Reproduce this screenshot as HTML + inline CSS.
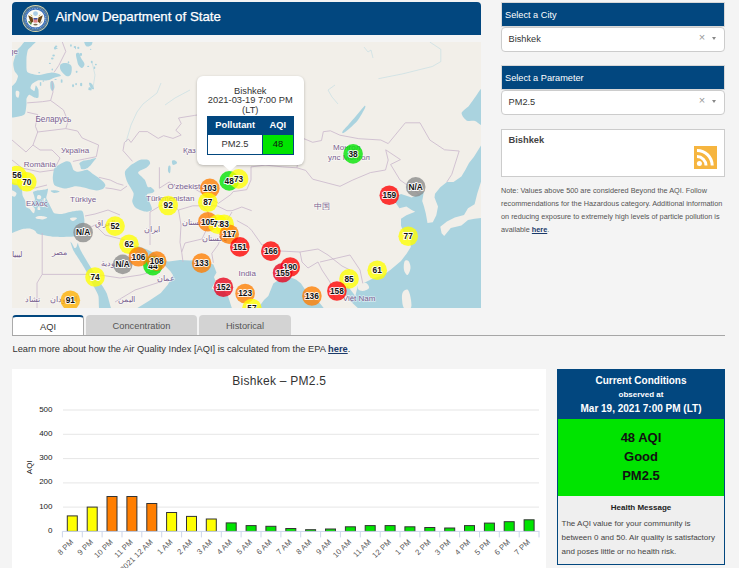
<!DOCTYPE html>
<html><head><meta charset="utf-8">
<style>
*{box-sizing:border-box;margin:0;padding:0}
html,body{width:739px;height:568px;overflow:hidden;background:#f4f4f4;font-family:"Liberation Sans",sans-serif;color:#333}
.abs{position:absolute}
#hdr{left:12px;top:2px;width:469px;height:33px;background:#02477f;border-radius:4px 4px 0 0}
#hdr .t{position:absolute;left:43.4px;top:6.8px;font-size:13.3px;color:#fff;line-height:16px;white-space:nowrap;-webkit-text-stroke:0.25px #fff}
#map{left:12px;top:42px;width:469px;height:266px;background:#f2efe9;overflow:hidden}
.ph{left:501px;width:224px;height:25px;background:#02477f;border:1px solid #d8d8d8;color:#fff;font-size:9.2px;padding:1.5px 0 0 3px;line-height:21.8px}
.sel{left:501px;width:224px;height:25px;background:#fff;border:1px solid #ccc;border-radius:4px;font-size:9.2px;color:#333;line-height:22.3px;padding-left:6.6px}
.sel .x{position:absolute;left:196.8px;top:-2.2px;color:#999;font-size:11px}
.sel .ar{position:absolute;left:209.6px;top:9.2px;width:0;height:0;border-left:2.8px solid transparent;border-right:2.8px solid transparent;border-top:3.4px solid #888}
#rss{left:501px;top:128.5px;width:224px;height:48px;background:#fff;border:1px solid #ccc}
#rss .n{position:absolute;left:6.5px;top:5.5px;font-size:9.3px;font-weight:bold;color:#444}
#rss .ic{position:absolute;left:192px;top:16.5px;width:23px;height:23px;background:#f6b53f}
#note{left:501px;top:184px;width:226px;font-size:7.3px;line-height:13px;color:#555}
#note b{color:#1a3a6a;text-decoration:underline}
.tab{top:315px;height:20px;background:#d3d3d3;border-radius:4px 4px 0 0;font-size:9.3px;color:#555;text-align:center;line-height:23px}
#tab1{left:12px;width:72px;background:#fff;border:1px solid #aaa;border-top:2px solid #02477f;border-bottom:none;color:#333;line-height:20.5px}
#tabline{left:12px;top:335px;width:713px;height:1px;background:#a6a6a6}
#learn{left:12.5px;top:344px;font-size:9.3px;color:#333;white-space:nowrap}
#learn b{color:#1a3a6a;text-decoration:underline}
#chart{left:12px;top:369px;width:534px;height:210px;background:#fff}
#cc{left:557px;top:369px;width:168px;height:196px;border:1px solid #02477f;background:#efefef}
#cc .top{position:absolute;left:0;top:0;width:166px;height:49px;background:#02477f;color:#fff;text-align:center;font-weight:bold}
#cc .g{position:absolute;left:0;top:49px;width:166px;height:77px;background:#00e400;color:#111;text-align:center;font-weight:bold;font-size:13px;line-height:19px;padding-top:9px}
#cc .hm{position:absolute;left:0;top:126px;width:166px;text-align:center;font-weight:bold;font-size:8px;color:#222}
#cc .body{position:absolute;left:3.5px;top:147px;width:162px;font-size:8px;line-height:14px;color:#444}
</style></head><body>

<div id="hdr" class="abs">
  <svg class="abs" style="left:9.1px;top:1.5px" width="29" height="29" viewBox="0 0 29 29">
    <circle cx="14.5" cy="14.5" r="13.4" fill="#dcd7a8"/>
    <circle cx="14.5" cy="14.5" r="12.6" fill="#2f63ad"/>
    <circle cx="14.5" cy="14.5" r="11.6" fill="none" stroke="#d8c84c" stroke-width="0.7" stroke-dasharray="0.8 0.6"/>
    <circle cx="14.5" cy="14.5" r="10.2" fill="none" stroke="#7aa3d8" stroke-width="1.2" stroke-dasharray="1 0.7"/>
    <circle cx="14.5" cy="14.5" r="9.1" fill="#fbfbf6"/>
    <circle cx="14.5" cy="9.6" r="2.4" fill="#a9cde6"/>
    <path d="M7.2 11.2 L11.6 13.6 L12.4 17.6 L10 19.2 L8.6 15.6 Z" fill="#6a4515"/>
    <path d="M21.8 11.2 L17.4 13.6 L16.6 17.6 L19 19.2 L20.4 15.6 Z" fill="#6a4515"/>
    <path d="M9.8 10.6 L11.2 12.2 M19.2 10.6 L17.8 12.2" stroke="#c8a838" stroke-width="0.8"/>
    <rect x="12.6" y="14" width="3.8" height="4.6" fill="#e07f86"/>
    <rect x="12.6" y="14" width="3.8" height="1.5" fill="#3c5aa8"/>
    <path d="M7.6 17.2 L10.4 20.2" stroke="#4d8a3c" stroke-width="1.5"/>
    <path d="M18.6 20 L21.4 17.4" stroke="#888" stroke-width="0.8"/>
    <ellipse cx="14.5" cy="20.6" rx="2.2" ry="0.9" fill="#7a6a50"/>
  </svg>
  <div class="t">AirNow Department of State</div>
</div>

<div id="map" class="abs">
<svg width="469" height="266" viewBox="0 0 469 266" style="position:absolute;left:0;top:0">
<rect width="469" height="266" fill="#f2efe9"/>
<g fill="#aad3df"><path d="M14.5,-2.0 C16.2,-2.7 24.6,-2.6 25.1,-2.0 C25.6,-1.4 20.7,3.0 19.8,4.0 C18.9,5.0 16.4,6.8 15.9,8.0 C15.4,9.2 14.6,14.1 14.5,15.9 C14.4,17.7 14.4,25.0 14.5,26.4 C14.6,27.9 14.7,29.7 15.9,30.4 C17.1,31.1 24.0,33.0 26.4,33.0 C28.8,33.0 37.6,30.5 39.6,30.4 C41.6,30.3 45.3,31.4 46.2,31.7 C47.1,32.0 49.3,33.3 48.9,33.7 C48.5,34.1 43.6,35.2 42.3,35.7 C41.0,36.2 37.3,38.0 35.7,38.3 C34.1,38.6 28.0,37.9 26.4,38.3 C24.8,38.7 20.6,41.5 19.8,42.3 C19.0,43.1 18.2,45.5 18.5,46.2 C18.8,46.9 22.0,49.2 22.5,48.9 C23.0,48.6 23.4,43.7 23.8,43.6 C24.2,43.5 26.1,46.4 26.4,47.6 C26.7,48.8 26.8,54.7 26.4,55.5 C26.0,56.3 23.4,55.8 22.5,55.5 C21.6,55.2 18.0,52.7 17.2,52.8 C16.4,52.9 14.8,55.9 14.5,56.8 C14.2,57.7 14.6,60.5 14.5,62.0 C14.4,63.5 13.7,70.1 13.2,71.3 C12.7,72.5 10.9,73.7 9.2,74.0 C7.5,74.3 -2.7,77.1 -4.0,74.0 C-5.3,70.9 -4.4,46.0 -4.0,43.0 C-3.6,40.0 -0.8,44.3 0.0,44.0 C0.8,43.7 3.4,41.0 4.0,40.0 C4.6,39.0 6.1,35.1 6.0,34.0 C5.9,32.9 3.1,30.3 2.6,29.0 C2.1,27.7 1.0,23.1 1.3,21.0 C1.6,18.9 4.6,9.6 5.3,8.0 C6.0,6.4 7.0,6.3 7.9,5.3 C8.8,4.3 12.8,-1.3 14.5,-2.0Z"/><path d="M49.0,22.0 C50.0,21.2 52.3,20.7 54.0,21.0 C55.7,21.3 58.6,22.2 59.4,24.0 C60.2,25.8 59.7,30.3 59.0,32.0 C58.3,33.7 56.5,34.6 55.0,34.3 C53.5,34.0 51.2,31.4 50.0,30.0 C48.8,28.6 48.2,27.3 48.0,26.0 C47.8,24.7 48.0,22.8 49.0,22.0Z"/><path d="M64.0,12.0 C64.3,10.8 66.2,10.3 67.0,11.0 C67.8,11.7 68.1,14.2 69.0,16.0 C69.9,17.8 72.3,20.3 72.5,22.0 C72.7,23.7 71.0,25.8 70.0,26.0 C69.0,26.2 67.3,24.3 66.5,23.0 C65.7,21.7 65.4,19.8 65.0,18.0 C64.6,16.2 63.7,13.2 64.0,12.0Z"/><path d="M72.0,-4.0 C73.0,-5.3 78.8,-5.2 80.0,-4.0 C81.2,-2.8 80.5,1.7 79.5,3.0 C78.5,4.3 75.2,5.2 74.0,4.0 C72.8,2.8 71.0,-2.7 72.0,-4.0Z"/><path d="M38.5,40.0 C38.9,38.9 40.3,38.7 41.0,39.5 C41.7,40.3 42.6,43.4 42.5,45.0 C42.4,46.6 41.2,48.8 40.5,49.0 C39.8,49.2 38.8,47.5 38.5,46.0 C38.2,44.5 38.1,41.1 38.5,40.0Z"/><path d="M77.0,41.0 C77.2,40.3 79.2,41.0 80.0,42.0 C80.8,43.0 82.2,46.3 82.0,47.0 C81.8,47.7 79.8,47.0 79.0,46.0 C78.2,45.0 76.8,41.7 77.0,41.0Z"/><path d="M40.8,136.3 C40.8,134.4 41.5,128.1 42.3,126.5 C43.1,124.9 46.6,123.0 47.9,122.2 C49.2,121.4 52.3,119.7 53.5,119.4 C54.7,119.1 57.2,119.5 58.0,120.0 C58.8,120.5 59.6,123.1 60.0,124.0 C60.4,124.9 60.9,127.3 61.5,128.0 C62.1,128.7 64.0,129.7 65.0,129.8 C66.0,129.9 68.8,129.3 70.0,129.1 C71.2,128.9 74.1,127.5 75.3,127.8 C76.5,128.1 79.4,130.9 80.6,131.8 C81.8,132.7 84.7,134.4 85.9,135.3 C87.1,136.2 90.3,138.8 91.2,139.7 C92.1,140.6 93.4,142.4 93.4,143.2 C93.4,144.0 92.2,146.1 91.2,146.7 C90.2,147.3 86.8,148.5 85.0,148.5 C83.2,148.5 77.7,147.0 76.2,146.7 C74.7,146.3 73.2,145.8 71.8,145.5 C70.4,145.2 65.8,144.2 63.8,144.3 C61.8,144.4 56.1,146.3 54.3,146.4 C52.5,146.5 49.4,145.8 48.0,145.4 C46.6,145.0 43.1,144.1 42.3,143.0 C41.5,141.9 40.8,138.2 40.8,136.3Z"/><path d="M67.4,121.2 C67.8,120.6 70.7,119.0 71.8,118.6 C72.9,118.2 75.7,118.0 77.1,117.7 C78.5,117.4 83.6,115.7 84.1,115.9 C84.6,116.1 82.1,118.6 81.5,119.4 C80.9,120.2 79.4,122.3 78.8,123.0 C78.2,123.7 76.8,125.1 76.2,125.6 C75.6,126.1 74.4,126.7 73.6,126.9 C72.8,127.1 69.8,127.3 69.2,126.9 C68.6,126.5 68.5,124.5 68.3,123.8 C68.1,123.1 67.0,121.8 67.4,121.2Z"/><path d="M38.7,148.8 C38.9,148.4 41.5,148.2 43.0,148.3 C44.5,148.4 47.7,149.1 47.5,149.5 C47.3,149.9 43.5,151.1 42.0,151.0 C40.5,150.9 38.5,149.2 38.7,148.8Z"/><path d="M-4.0,142.0 C-2.7,137.2 7.3,142.8 8.8,144.0 C10.3,145.2 10.2,152.1 10.6,153.6 C11.0,155.1 12.9,157.8 13.2,158.9 C13.5,160.0 13.6,164.2 14.0,165.0 C14.4,165.8 17.0,166.3 17.6,166.8 C18.2,167.3 19.8,169.9 20.2,170.3 C20.6,170.7 21.7,171.5 22.0,171.2 C22.3,170.8 23.1,167.7 22.9,166.8 C22.7,165.9 20.2,163.3 20.2,162.4 C20.2,161.5 22.7,158.9 22.9,158.0 C23.1,157.1 22.2,154.4 22.0,153.6 C21.8,152.8 20.7,150.5 21.1,150.0 C21.5,149.5 25.2,148.6 26.4,148.3 C27.6,148.0 32.5,147.6 33.5,147.4 C34.5,147.2 35.8,146.4 36.0,146.8 C36.2,147.2 35.4,150.9 35.2,151.8 C35.0,152.7 34.1,155.2 34.3,156.2 C34.5,157.2 36.5,160.4 37.0,161.5 C37.5,162.6 39.1,165.8 39.6,166.8 C40.1,167.8 41.3,170.7 42.3,171.2 C43.3,171.7 48.2,172.2 50.0,172.0 C51.8,171.8 58.1,169.8 60.0,169.5 C61.9,169.2 68.0,168.5 69.1,168.6 C70.2,168.7 70.9,169.9 71.2,170.7 C71.5,171.5 72.2,175.8 72.3,177.0 C72.4,178.2 72.5,181.2 72.3,182.3 C72.1,183.4 71.2,187.1 70.5,188.0 C69.8,188.9 65.8,190.8 65.0,191.5 C64.2,192.2 64.3,194.2 62.0,194.5 C59.7,194.8 45.9,195.1 42.3,194.8 C38.7,194.6 27.9,192.6 26.0,192.0 C24.1,191.4 24.0,189.5 23.2,189.0 C22.4,188.5 19.3,186.8 18.0,186.6 C16.7,186.4 12.4,186.6 10.6,187.0 C8.8,187.4 1.5,190.5 0.0,191.0 C-1.5,191.5 -3.6,196.9 -4.0,192.0 C-4.4,187.1 -5.3,146.8 -4.0,142.0Z"/><path d="M58.5,200.0 C58.3,199.2 59.6,200.9 60.0,201.5 C60.4,202.1 62.0,205.7 62.5,206.0 C63.0,206.3 64.2,205.5 64.5,205.0 C64.8,204.5 65.6,201.1 65.8,201.0 C66.0,200.9 66.5,203.2 66.8,204.0 C67.1,204.8 68.0,207.2 69.0,209.0 C70.0,210.8 74.9,219.2 76.8,222.3 C78.7,225.4 86.0,237.2 87.8,240.1 C89.6,243.0 93.5,248.5 94.6,251.1 C95.7,253.7 98.3,264.1 99.0,266.0 C99.7,267.9 103.1,269.6 102.0,270.0 C100.9,270.4 89.6,271.6 88.0,270.0 C86.4,268.4 87.1,256.6 86.4,253.9 C85.7,251.2 82.4,245.6 81.0,242.9 C79.6,240.1 74.6,229.8 72.7,226.4 C70.8,223.0 63.1,211.6 61.7,209.0 C60.3,206.4 58.7,200.8 58.5,200.0Z"/><path d="M121.5,121.6 C122.8,120.8 125.6,118.4 127.6,117.9 C129.6,117.4 134.9,117.4 136.3,117.9 C137.7,118.4 138.3,120.6 138.1,121.6 C137.9,122.6 136.4,124.3 135.0,125.3 C133.6,126.3 128.7,128.2 127.6,129.0 C126.5,129.8 125.7,130.3 126.4,131.4 C127.1,132.5 131.4,135.8 132.6,137.6 C133.8,139.4 134.9,144.0 135.7,145.0 C136.5,146.0 137.8,144.5 138.7,145.0 C139.6,145.5 142.2,147.9 142.4,148.7 C142.6,149.5 141.0,150.6 140.0,151.1 C139.0,151.6 135.5,151.6 135.0,152.4 C134.5,153.2 135.6,155.3 136.3,157.3 C137.0,159.3 140.3,165.6 140.0,167.2 C139.7,168.8 135.9,169.8 133.8,169.6 C131.7,169.4 125.8,167.2 124.0,165.9 C122.2,164.6 120.6,161.8 120.3,159.8 C120.0,157.8 122.2,153.7 121.5,151.1 C120.8,148.5 116.4,142.8 115.3,140.0 C114.2,137.2 112.6,132.3 112.9,130.2 C113.2,128.1 116.7,125.1 117.8,124.0 C118.9,122.9 120.2,122.4 121.5,121.6Z"/><path d="M160.0,119.0 C160.3,118.2 162.2,118.2 163.0,118.5 C163.8,118.8 165.3,120.2 165.0,121.0 C164.7,121.8 161.8,123.3 161.0,123.0 C160.2,122.7 159.7,119.8 160.0,119.0Z"/><path d="M156.5,124.0 C156.9,123.2 158.2,123.3 158.5,124.5 C158.8,125.7 158.4,130.2 158.0,131.0 C157.6,131.8 156.2,130.2 156.0,129.0 C155.8,127.8 156.1,124.8 156.5,124.0Z"/><path d="M120.0,203.0 C120.7,202.0 128.1,205.1 130.8,206.0 C133.5,206.9 137.7,208.7 140.0,210.0 C142.3,211.3 147.3,214.4 148.4,216.0 C149.5,217.6 148.3,220.7 148.0,222.0 C147.7,223.3 147.5,225.8 145.9,226.0 C144.3,226.2 138.5,225.3 135.8,223.6 C133.1,221.9 127.9,216.3 125.8,213.6 C123.7,210.9 119.3,204.0 120.0,203.0Z"/><path d="M118.0,270.0 L125.4,266.0 L136.4,259.3 L148.8,251.1 L155.6,242.9 L161.1,233.3 L158.4,229.2 L152.9,223.7 L152.9,219.0 L157.0,219.5 L168.0,218.0 L178.0,218.5 L185.5,217.7 L193.0,219.5 L201.4,222.5 L204.5,230.4 L202.0,235.0 L203.4,238.9 L199.6,246.4 L207.2,250.2 L212.2,249.0 L216.0,254.0 L219.8,266.0 L220.0,270.0Z"/><path d="M243.0,268.0 L246.2,266.0 L252.0,258.0 L256.3,254.0 L261.3,241.4 L268.0,237.0 L274.0,233.8 L284.0,237.6 L289.0,241.4 L294.0,249.0 L304.0,256.5 L311.7,266.0 L312.0,268.0Z"/><path d="M472.0,98.0 L472.0,270.0 L343.0,270.0 L345.8,266.0 L338.2,259.0 L330.7,249.0 L335.7,244.0 L343.3,254.0 L345.8,244.0 L350.8,241.4 L360.9,236.4 L371.5,233.0 L378.6,227.7 L389.0,219.0 L394.4,211.9 L398.8,204.9 L398.0,196.0 L391.8,190.8 L389.0,183.7 L389.0,176.7 L394.4,173.2 L403.2,169.7 L399.7,168.0 L394.4,164.4 L387.4,166.2 L383.8,160.9 L385.6,153.8 L389.0,152.0 L394.4,153.8 L399.7,155.6 L406.7,152.0 L412.0,149.0 L410.2,159.0 L412.0,164.4 L413.8,171.4 L415.5,181.0 L420.8,180.2 L424.3,173.2 L426.0,164.4 L422.5,155.6 L423.0,151.7 L428.3,145.2 L434.9,139.9 L441.5,139.9 L449.4,134.6 L453.3,128.0 L457.0,121.0 L461.8,115.0 L469.0,103.5 L472.0,101.0Z"/><path d="M472.0,46.0 C470.9,42.3 466.0,51.6 464.0,54.0 C462.0,56.4 458.9,61.4 457.0,63.7 C455.1,66.0 449.9,69.0 449.6,71.0 C449.3,73.0 452.7,77.3 454.5,78.4 C456.3,79.5 460.7,78.5 463.0,79.0 C465.3,79.5 470.8,86.4 472.0,82.0 C473.2,77.6 473.1,49.7 472.0,46.0Z"/><path d="M352.2,64.2 C353.4,63.1 353.8,64.2 353.0,66.0 C352.2,67.8 348.0,75.3 346.0,78.0 C344.0,80.7 339.9,84.3 338.0,86.0 C336.1,87.7 332.5,90.5 331.5,91.0 C330.5,91.5 329.8,90.7 330.5,89.5 C331.2,88.3 335.2,84.1 337.0,82.0 C338.8,79.9 342.0,76.4 344.0,74.0 C346.0,71.6 351.0,65.3 352.2,64.2Z"/><path d="M39.5,27.5 a0.8,1.1 0 1 0 1.6,0 a0.8,1.1 0 1 0 -1.6,0Z"/><path d="M63.0,5.9 a0.5,1.3 0 1 0 1.0,0 a0.5,1.3 0 1 0 -1.0,0Z"/><path d="M40.3,13.5 a1.3,1.0 0 1 0 2.6,0 a1.3,1.0 0 1 0 -2.6,0Z"/><path d="M75.2,24.4 a1.0,0.7 0 1 0 2.0,0 a1.0,0.7 0 1 0 -2.0,0Z"/><path d="M63.2,42.1 a0.9,1.2 0 1 0 1.8,0 a0.9,1.2 0 1 0 -1.8,0Z"/><path d="M65.2,5.9 a1.1,1.1 0 1 0 2.2,0 a1.1,1.1 0 1 0 -2.2,0Z"/><path d="M42.9,4.4 a1.2,1.0 0 1 0 2.4,0 a1.2,1.0 0 1 0 -2.4,0Z"/><path d="M68.1,42.5 a1.1,1.4 0 1 0 2.1,0 a1.1,1.4 0 1 0 -2.1,0Z"/><path d="M48.8,39.0 a0.9,1.4 0 1 0 1.7,0 a0.9,1.4 0 1 0 -1.7,0Z"/><path d="M78.1,7.4 a0.6,0.7 0 1 0 1.2,0 a0.6,0.7 0 1 0 -1.2,0Z"/><path d="M82.9,22.6 a1.0,0.8 0 1 0 2.0,0 a1.0,0.8 0 1 0 -2.0,0Z"/><path d="M55.7,20.4 a0.8,1.1 0 1 0 1.6,0 a0.8,1.1 0 1 0 -1.6,0Z"/><path d="M60.0,43.7 a1.0,1.4 0 1 0 2.1,0 a1.0,1.4 0 1 0 -2.1,0Z"/><path d="M76.3,47.6 a1.0,0.7 0 1 0 2.1,0 a1.0,0.7 0 1 0 -2.1,0Z"/><path d="M76.4,46.4 a1.2,1.1 0 1 0 2.4,0 a1.2,1.1 0 1 0 -2.4,0Z"/><path d="M67.7,12.5 a1.2,1.1 0 1 0 2.3,0 a1.2,1.1 0 1 0 -2.3,0Z"/><path d="M41.9,5.9 a1.2,1.5 0 1 0 2.4,0 a1.2,1.5 0 1 0 -2.4,0Z"/><path d="M30.5,39.0 a0.8,0.7 0 1 0 1.7,0 a0.8,0.7 0 1 0 -1.7,0Z"/><path d="M42.4,37.6 a1.2,0.5 0 1 0 2.4,0 a1.2,0.5 0 1 0 -2.4,0Z"/><path d="M61.8,5.0 a1.1,0.8 0 1 0 2.1,0 a1.1,0.8 0 1 0 -2.1,0Z"/><path d="M77.9,47.1 a0.9,1.5 0 1 0 1.8,0 a0.9,1.5 0 1 0 -1.8,0Z"/><path d="M43.6,6.5 a1.0,0.5 0 1 0 2.0,0 a1.0,0.5 0 1 0 -2.0,0Z"/><path d="M36.9,21.4 a1.0,0.7 0 1 0 2.0,0 a1.0,0.7 0 1 0 -2.0,0Z"/><path d="M27.8,42.1 a0.8,1.5 0 1 0 1.5,0 a0.8,1.5 0 1 0 -1.5,0Z"/><path d="M78.9,20.0 a0.9,1.0 0 1 0 1.7,0 a0.9,1.0 0 1 0 -1.7,0Z"/><path d="M63.7,29.8 a0.9,1.1 0 1 0 1.9,0 a0.9,1.1 0 1 0 -1.9,0Z"/><path d="M81.6,25.8 a0.8,1.2 0 1 0 1.7,0 a0.8,1.2 0 1 0 -1.7,0Z"/><path d="M39.0,16.5 a1.3,1.0 0 1 0 2.6,0 a1.3,1.0 0 1 0 -2.6,0Z"/><path d="M58.1,3.5 a0.8,1.1 0 1 0 1.7,0 a0.8,1.1 0 1 0 -1.7,0Z"/><path d="M26.2,30.7 a1.0,0.6 0 1 0 2.0,0 a1.0,0.6 0 1 0 -2.0,0Z"/></g>
<g fill="#f2efe9"><path d="M-4.0,147.0 C-3.3,146.2 -1.4,147.6 0.0,148.3 C1.4,149.0 3.9,150.0 4.4,151.0 C4.9,152.0 3.7,154.0 3.0,154.5 C2.3,155.0 1.2,154.2 0.0,154.0 C-1.2,153.8 -3.3,154.2 -4.0,153.0 C-4.7,151.8 -4.7,147.8 -4.0,147.0Z"/><path d="M23.8,175.0 C24.5,174.5 27.1,173.9 29.0,174.0 C30.9,174.1 34.9,174.9 35.2,175.5 C35.5,176.1 32.7,177.2 31.0,177.4 C29.3,177.6 26.2,177.2 25.0,176.8 C23.8,176.4 23.1,175.5 23.8,175.0Z"/><path d="M58.0,176.5 C58.2,175.9 60.8,175.6 62.0,175.5 C63.2,175.4 65.2,175.6 65.0,176.2 C64.8,176.8 62.2,178.9 61.0,179.0 C59.8,179.1 57.8,177.1 58.0,176.5Z"/><path d="M468.9,139.9 L465.2,151.7 L462.6,162.3 L456.0,166.3 L452.0,172.9 L442.8,175.5 L434.9,179.5 L428.3,184.7 L429.6,191.3 L432.2,194.0 L438.8,186.0 L449.4,183.4 L456.0,178.0 L462.6,176.8 L472.0,175.5 L472.0,139.0Z"/><path d="M392.5,219.5 C393.2,218.0 395.5,217.9 396.5,219.0 C397.5,220.1 398.7,223.7 398.5,226.0 C398.3,228.3 396.6,232.7 395.5,233.0 C394.4,233.3 392.5,230.2 392.0,228.0 C391.5,225.8 391.8,221.0 392.5,219.5Z"/><path d="M347.0,242.0 C348.3,241.0 352.3,240.3 354.0,241.0 C355.7,241.7 357.5,244.7 357.0,246.0 C356.5,247.3 352.8,248.8 351.0,249.0 C349.2,249.2 346.7,248.2 346.0,247.0 C345.3,245.8 345.7,243.0 347.0,242.0Z"/><path d="M391.0,250.0 C392.0,248.5 394.7,246.7 396.0,248.0 C397.3,249.3 398.6,255.0 399.0,258.0 C399.4,261.0 399.9,264.7 398.7,266.0 C397.5,267.3 393.4,267.5 392.0,266.0 C390.6,264.5 390.2,259.7 390.0,257.0 C389.8,254.3 390.0,251.5 391.0,250.0Z"/><path d="M4.0,49.0 C4.5,48.3 6.9,48.9 7.3,50.0 C7.7,51.1 7.0,54.8 6.5,55.5 C6.0,56.2 4.4,55.1 4.0,54.0 C3.6,52.9 3.4,49.7 4.0,49.0Z"/><path d="M26.0,153.0 C26.7,152.6 28.6,153.3 29.0,154.0 C29.4,154.7 29.2,156.6 28.5,157.0 C27.8,157.4 25.4,157.2 25.0,156.5 C24.6,155.8 25.3,153.4 26.0,153.0Z"/><path d="M30.0,161.0 C30.5,160.7 32.2,161.3 32.5,162.0 C32.8,162.7 32.5,164.7 32.0,165.0 C31.5,165.3 29.8,164.7 29.5,164.0 C29.2,163.3 29.5,161.3 30.0,161.0Z"/><path d="M26.0,165.0 C26.4,164.7 27.7,165.0 28.0,165.5 C28.3,166.0 28.4,167.7 28.0,168.0 C27.6,168.3 25.8,168.0 25.5,167.5 C25.2,167.0 25.6,165.3 26.0,165.0Z"/><path d="M32.0,156.0 C32.3,155.7 33.3,156.0 33.5,156.5 C33.7,157.0 33.3,158.7 33.0,159.0 C32.7,159.3 31.7,159.0 31.5,158.5 C31.3,158.0 31.7,156.3 32.0,156.0Z"/></g>
<g fill="none" stroke="#c0dbe3" stroke-width="0.6"><path d="M80.0,20.0 L83.0,33.0 L81.0,46.0"/><path d="M114.0,100.0 L119.0,83.0 L125.0,70.0 L131.0,62.0 L145.0,51.0 L149.0,41.0"/><path d="M153.0,63.0 L163.0,56.0 L178.0,48.0"/><path d="M417.8,0.0 L428.8,7.3 L428.8,19.6 L420.3,24.5 L390.9,31.8 L366.4,36.7"/><path d="M352.0,5.0 L356.0,10.0 L359.0,8.0 L361.0,16.0"/><path d="M323.0,43.0 L316.0,48.0 L320.0,55.0 L326.0,62.0"/></g>
<g fill="none" stroke="#c9b6cc" stroke-width="0.8" stroke-linejoin="round"><path d="M50.3,0.0 L53.8,9.4 L46.8,23.4 L42.0,30.4"/><path d="M40.0,39.0 L41.0,50.0 L38.6,58.5"/><path d="M38.6,58.5 L42.0,60.9 L51.5,68.0 L56.0,79.6 L53.8,86.6 L65.5,89.0 L70.2,96.0 L86.6,103.0 L84.3,114.7 L72.6,117.0 L60.9,119.4"/><path d="M15.2,60.9 L30.4,59.7 L38.6,58.5"/><path d="M15.2,70.2 L25.7,72.6 L23.4,84.3 L25.7,90.0 L53.8,86.6"/><path d="M25.7,90.0 L21.0,103.0 L14.0,110.0 L0.0,98.0"/><path d="M21.0,103.0 L28.0,108.0 L40.0,108.0 L48.0,116.0 L44.0,124.0"/><path d="M0.0,118.0 L10.0,126.0 L28.0,130.0 L42.0,128.0"/><path d="M8.0,143.0 L23.0,146.0 L35.0,143.0"/><path d="M120.5,119.4 L111.0,108.6 L112.4,100.5 L116.4,97.0 L119.0,100.5 L127.2,89.6 L135.4,89.6 L146.2,96.4 L151.6,93.7 L161.0,96.4 L169.2,93.0 L163.8,88.3 L169.2,81.5 L166.5,76.0 L182.7,73.4 L203.0,70.0 L223.0,74.0 L238.0,78.0 L250.0,76.0 L263.0,83.0 L278.0,86.0 L292.0,96.7 L300.7,100.3 L309.5,98.5 L311.3,89.7 L318.4,88.8 L328.0,93.2 L346.8,96.7 L368.8,98.0 L376.2,101.6 L393.3,80.8 L408.0,80.8 L417.8,98.0 L432.5,107.8 L447.2,109.0 L439.8,132.3 L434.9,139.9"/><path d="M292.0,96.7 L288.0,108.0 L284.9,125.8"/><path d="M239.0,124.9 L253.2,123.1 L270.8,124.9 L284.9,125.8 L293.7,128.4 L300.7,137.2 L328.0,144.3 L340.8,138.0 L358.4,130.6 L373.5,128.0 L376.2,118.0 L373.7,107.8 L388.4,117.6 L378.6,122.5 L388.0,138.0 L398.0,145.0 L406.7,152.0"/><path d="M147.4,125.3 L147.4,146.2 L157.2,140.0 L168.0,148.0 L178.0,144.0 L193.0,153.0 L206.4,161.3 L218.7,152.7 L221.2,149.6 L234.7,147.7 L239.0,138.0 L239.0,124.9"/><path d="M190.3,163.8 L205.0,163.8 L215.0,168.7 L220.0,168.7 L229.8,165.0 L239.7,168.7"/><path d="M138.0,170.0 L148.0,164.0 L158.0,161.0 L166.5,168.0 L180.8,163.8 L190.3,163.8"/><path d="M166.5,168.0 L169.0,183.0 L168.0,200.3 L169.7,210.0 L171.0,220.0"/><path d="M190.3,163.8 L196.0,170.0 L198.0,180.0 L190.0,197.0 L173.0,201.0 L169.7,210.0"/><path d="M220.0,170.0 L214.0,180.0 L209.0,195.5 L206.0,203.0 L199.8,211.4 L201.4,220.8"/><path d="M224.9,178.6 L236.0,184.7 L239.7,188.4 L250.0,203.0 L268.0,209.0 L288.0,210.0 L306.0,207.0 L316.0,213.0 L330.0,224.0 L338.0,228.0"/><path d="M288.0,210.0 L290.0,220.0 L296.0,226.0 L306.0,220.0 L310.0,228.0 L318.0,240.0 L323.0,258.0"/><path d="M30.2,191.0 L30.2,232.4 L75.5,232.4"/><path d="M30.2,232.4 L25.0,241.0 L25.0,266.0"/><path d="M73.0,188.0 L83.0,183.0 L93.0,193.0 L113.0,198.0 L120.0,205.0"/><path d="M73.0,174.0 L83.0,172.0 L96.0,168.0 L108.0,173.0"/><path d="M86.8,135.3 L98.2,138.0 L105.3,141.5 L111.4,143.2"/><path d="M93.4,145.9 L100.0,146.7 L108.8,148.5 L115.0,144.0"/><path d="M88.0,233.0 L108.0,236.0 L128.0,233.0 L148.0,228.0"/><path d="M103.0,260.0 L123.0,248.0 L148.0,240.0"/><path d="M138.0,170.0 L138.0,203.0"/><path d="M308.0,220.0 L338.0,213.0 L348.0,228.0 L350.8,241.4"/></g>
<g font-family="Liberation Sans" fill="#7a6190" stroke="#fff" stroke-width="1.4" stroke-opacity="0.55" paint-order="stroke"><text x="23.5" y="79.8" font-size="8.2">Беларусь</text><text x="49.0" y="111.0" font-size="8">Україна</text><text x="11.7" y="125.3" font-size="8">România</text><text x="14.0" y="164.0" font-size="8">Ελλάς</text><text x="58.0" y="160.0" font-size="8">Türkiye</text><text x="171.0" y="110.5" font-size="8">Қаз</text><text x="155.5" y="147.0" font-size="8">O'zbekiston</text><text x="134.0" y="159.0" font-size="8">Türkmenistan</text><text x="170.0" y="183.0" font-size="8">افغانستان</text><text x="190.0" y="198.6" font-size="8">پاکستان</text><text x="226.5" y="234.2" font-size="8">India</text><text x="301.6" y="166.5" font-size="8">中国</text><text x="321.0" y="107.5" font-size="8">Монгол</text><text x="316.0" y="117.5" font-size="8">улс Монгол</text><text x="330.7" y="259.0" font-size="8">Việt Nam</text><text x="40.0" y="213.0" font-size="8">مصر</text><text x="132.0" y="190.0" font-size="8">ايران</text><text x="89.0" y="224.0" font-size="8">السعودية</text><text x="144.6" y="239.0" font-size="8">عمان</text><text x="106.0" y="260.0" font-size="8">اليمن</text><text x="38.0" y="260.0" font-size="8">السودان</text><text x="13.0" y="260.0" font-size="8">تشاد</text><text x="83.0" y="184.0" font-size="8">العراق</text><text x="0.0" y="215.0" font-size="8">ليبيا</text><text x="-3.0" y="12.0" font-size="8">ge</text></g>
<g font-family="Liberation Sans" font-weight="bold" font-size="8.3" text-anchor="middle">
<circle cx="4.9" cy="133.5" r="9.8" fill="#ffff00" fill-opacity="0.78"/>
<circle cx="14.8" cy="139.8" r="9.8" fill="#ffff00" fill-opacity="0.78"/>
<circle cx="71.1" cy="190.5" r="9.8" fill="#8a8a8a" fill-opacity="0.78"/>
<circle cx="103.1" cy="184.1" r="9.8" fill="#ffff00" fill-opacity="0.78"/>
<circle cx="117.0" cy="202.2" r="9.8" fill="#ffff00" fill-opacity="0.78"/>
<circle cx="110.7" cy="222.4" r="9.8" fill="#8a8a8a" fill-opacity="0.78"/>
<circle cx="140.9" cy="223.6" r="9.8" fill="#00e400" fill-opacity="0.78"/>
<circle cx="126.5" cy="214.8" r="9.8" fill="#ff7e00" fill-opacity="0.78"/>
<circle cx="144.7" cy="219.1" r="9.8" fill="#ff7e00" fill-opacity="0.78"/>
<circle cx="83.0" cy="235.0" r="9.8" fill="#ffff00" fill-opacity="0.78"/>
<circle cx="58.3" cy="258.3" r="9.8" fill="#ffb000" fill-opacity="0.78"/>
<circle cx="156.2" cy="163.5" r="9.8" fill="#ffff00" fill-opacity="0.78"/>
<circle cx="197.8" cy="146.4" r="9.8" fill="#ff7e00" fill-opacity="0.78"/>
<circle cx="195.8" cy="160.3" r="9.8" fill="#ffff00" fill-opacity="0.78"/>
<circle cx="217.2" cy="138.9" r="9.8" fill="#00e400" fill-opacity="0.78"/>
<circle cx="226.6" cy="136.9" r="9.8" fill="#ffff00" fill-opacity="0.78"/>
<circle cx="195.8" cy="179.7" r="9.8" fill="#ff7e00" fill-opacity="0.78"/>
<circle cx="205.9" cy="182.2" r="9.8" fill="#ffff00" fill-opacity="0.78"/>
<circle cx="212.2" cy="182.2" r="9.8" fill="#ffff00" fill-opacity="0.78"/>
<circle cx="217.2" cy="192.3" r="9.8" fill="#ff7e00" fill-opacity="0.78"/>
<circle cx="227.8" cy="204.9" r="9.8" fill="#ff0000" fill-opacity="0.78"/>
<circle cx="258.8" cy="209.1" r="9.8" fill="#ff0000" fill-opacity="0.78"/>
<circle cx="278.2" cy="225.0" r="9.8" fill="#ff0000" fill-opacity="0.78"/>
<circle cx="270.6" cy="230.8" r="9.8" fill="#e8001a" fill-opacity="0.78"/>
<circle cx="189.6" cy="221.1" r="9.8" fill="#ff7e00" fill-opacity="0.78"/>
<circle cx="211.4" cy="245.2" r="9.8" fill="#e8001a" fill-opacity="0.78"/>
<circle cx="233.1" cy="251.5" r="9.8" fill="#ff7e00" fill-opacity="0.78"/>
<circle cx="299.9" cy="254.0" r="9.8" fill="#ff7e00" fill-opacity="0.78"/>
<circle cx="239.9" cy="266.5" r="9.8" fill="#ffff00" fill-opacity="0.78"/>
<circle cx="377.3" cy="153.2" r="9.8" fill="#ff0000" fill-opacity="0.78"/>
<circle cx="403.7" cy="144.9" r="9.8" fill="#8a8a8a" fill-opacity="0.78"/>
<circle cx="396.2" cy="194.3" r="9.8" fill="#ffff00" fill-opacity="0.78"/>
<circle cx="365.2" cy="228.3" r="9.8" fill="#ffff00" fill-opacity="0.78"/>
<circle cx="337.0" cy="236.9" r="9.8" fill="#ffff00" fill-opacity="0.78"/>
<circle cx="324.9" cy="249.0" r="9.8" fill="#ff0000" fill-opacity="0.78"/>
<circle cx="341.1" cy="111.9" r="9.8" fill="#00e400" fill-opacity="0.78"/>
<text x="4.9" y="136.4" stroke="#fff" stroke-width="2" stroke-linejoin="round" stroke-opacity="0.9" fill="#fff">56</text><text x="4.9" y="136.4" fill="#111">56</text>
<text x="14.8" y="142.7" stroke="#fff" stroke-width="2" stroke-linejoin="round" stroke-opacity="0.9" fill="#fff">70</text><text x="14.8" y="142.7" fill="#111">70</text>
<text x="71.1" y="193.4" stroke="#fff" stroke-width="2" stroke-linejoin="round" stroke-opacity="0.9" fill="#fff">N/A</text><text x="71.1" y="193.4" fill="#111">N/A</text>
<text x="103.1" y="187.0" stroke="#fff" stroke-width="2" stroke-linejoin="round" stroke-opacity="0.9" fill="#fff">52</text><text x="103.1" y="187.0" fill="#111">52</text>
<text x="117.0" y="205.1" stroke="#fff" stroke-width="2" stroke-linejoin="round" stroke-opacity="0.9" fill="#fff">62</text><text x="117.0" y="205.1" fill="#111">62</text>
<text x="110.7" y="225.3" stroke="#fff" stroke-width="2" stroke-linejoin="round" stroke-opacity="0.9" fill="#fff">N/A</text><text x="110.7" y="225.3" fill="#111">N/A</text>
<text x="140.9" y="226.5" stroke="#fff" stroke-width="2" stroke-linejoin="round" stroke-opacity="0.9" fill="#fff">44</text><text x="140.9" y="226.5" fill="#111">44</text>
<text x="126.5" y="217.7" stroke="#fff" stroke-width="2" stroke-linejoin="round" stroke-opacity="0.9" fill="#fff">106</text><text x="126.5" y="217.7" fill="#111">106</text>
<text x="144.7" y="222.0" stroke="#fff" stroke-width="2" stroke-linejoin="round" stroke-opacity="0.9" fill="#fff">108</text><text x="144.7" y="222.0" fill="#111">108</text>
<text x="83.0" y="237.9" stroke="#fff" stroke-width="2" stroke-linejoin="round" stroke-opacity="0.9" fill="#fff">74</text><text x="83.0" y="237.9" fill="#111">74</text>
<text x="58.3" y="261.2" stroke="#fff" stroke-width="2" stroke-linejoin="round" stroke-opacity="0.9" fill="#fff">91</text><text x="58.3" y="261.2" fill="#111">91</text>
<text x="156.2" y="166.4" stroke="#fff" stroke-width="2" stroke-linejoin="round" stroke-opacity="0.9" fill="#fff">92</text><text x="156.2" y="166.4" fill="#111">92</text>
<text x="197.8" y="149.3" stroke="#fff" stroke-width="2" stroke-linejoin="round" stroke-opacity="0.9" fill="#fff">103</text><text x="197.8" y="149.3" fill="#111">103</text>
<text x="195.8" y="163.2" stroke="#fff" stroke-width="2" stroke-linejoin="round" stroke-opacity="0.9" fill="#fff">87</text><text x="195.8" y="163.2" fill="#111">87</text>
<text x="217.2" y="141.8" stroke="#fff" stroke-width="2" stroke-linejoin="round" stroke-opacity="0.9" fill="#fff">48</text><text x="217.2" y="141.8" fill="#111">48</text>
<text x="226.6" y="139.8" stroke="#fff" stroke-width="2" stroke-linejoin="round" stroke-opacity="0.9" fill="#fff">73</text><text x="226.6" y="139.8" fill="#111">73</text>
<text x="195.8" y="182.6" stroke="#fff" stroke-width="2" stroke-linejoin="round" stroke-opacity="0.9" fill="#fff">105</text><text x="195.8" y="182.6" fill="#111">105</text>
<text x="205.9" y="185.1" stroke="#fff" stroke-width="2" stroke-linejoin="round" stroke-opacity="0.9" fill="#fff">73</text><text x="205.9" y="185.1" fill="#111">73</text>
<text x="212.2" y="185.1" stroke="#fff" stroke-width="2" stroke-linejoin="round" stroke-opacity="0.9" fill="#fff">83</text><text x="212.2" y="185.1" fill="#111">83</text>
<text x="217.2" y="195.2" stroke="#fff" stroke-width="2" stroke-linejoin="round" stroke-opacity="0.9" fill="#fff">117</text><text x="217.2" y="195.2" fill="#111">117</text>
<text x="227.8" y="207.8" stroke="#fff" stroke-width="2" stroke-linejoin="round" stroke-opacity="0.9" fill="#fff">151</text><text x="227.8" y="207.8" fill="#111">151</text>
<text x="258.8" y="212.0" stroke="#fff" stroke-width="2" stroke-linejoin="round" stroke-opacity="0.9" fill="#fff">166</text><text x="258.8" y="212.0" fill="#111">166</text>
<text x="278.2" y="227.9" stroke="#fff" stroke-width="2" stroke-linejoin="round" stroke-opacity="0.9" fill="#fff">190</text><text x="278.2" y="227.9" fill="#111">190</text>
<text x="270.6" y="233.7" stroke="#fff" stroke-width="2" stroke-linejoin="round" stroke-opacity="0.9" fill="#fff">155</text><text x="270.6" y="233.7" fill="#111">155</text>
<text x="189.6" y="224.0" stroke="#fff" stroke-width="2" stroke-linejoin="round" stroke-opacity="0.9" fill="#fff">133</text><text x="189.6" y="224.0" fill="#111">133</text>
<text x="211.4" y="248.1" stroke="#fff" stroke-width="2" stroke-linejoin="round" stroke-opacity="0.9" fill="#fff">152</text><text x="211.4" y="248.1" fill="#111">152</text>
<text x="233.1" y="254.4" stroke="#fff" stroke-width="2" stroke-linejoin="round" stroke-opacity="0.9" fill="#fff">123</text><text x="233.1" y="254.4" fill="#111">123</text>
<text x="299.9" y="256.9" stroke="#fff" stroke-width="2" stroke-linejoin="round" stroke-opacity="0.9" fill="#fff">136</text><text x="299.9" y="256.9" fill="#111">136</text>
<text x="239.9" y="269.4" stroke="#fff" stroke-width="2" stroke-linejoin="round" stroke-opacity="0.9" fill="#fff">57</text><text x="239.9" y="269.4" fill="#111">57</text>
<text x="377.3" y="156.1" stroke="#fff" stroke-width="2" stroke-linejoin="round" stroke-opacity="0.9" fill="#fff">159</text><text x="377.3" y="156.1" fill="#111">159</text>
<text x="403.7" y="147.8" stroke="#fff" stroke-width="2" stroke-linejoin="round" stroke-opacity="0.9" fill="#fff">N/A</text><text x="403.7" y="147.8" fill="#111">N/A</text>
<text x="396.2" y="197.2" stroke="#fff" stroke-width="2" stroke-linejoin="round" stroke-opacity="0.9" fill="#fff">77</text><text x="396.2" y="197.2" fill="#111">77</text>
<text x="365.2" y="231.2" stroke="#fff" stroke-width="2" stroke-linejoin="round" stroke-opacity="0.9" fill="#fff">61</text><text x="365.2" y="231.2" fill="#111">61</text>
<text x="337.0" y="239.8" stroke="#fff" stroke-width="2" stroke-linejoin="round" stroke-opacity="0.9" fill="#fff">85</text><text x="337.0" y="239.8" fill="#111">85</text>
<text x="324.9" y="251.9" stroke="#fff" stroke-width="2" stroke-linejoin="round" stroke-opacity="0.9" fill="#fff">158</text><text x="324.9" y="251.9" fill="#111">158</text>
<text x="341.1" y="114.8" stroke="#fff" stroke-width="2" stroke-linejoin="round" stroke-opacity="0.9" fill="#fff">38</text><text x="341.1" y="114.8" fill="#111">38</text>
</g></svg>
</div>


<div id="pop" class="abs" style="left:196.5px;top:75.5px;width:107.5px;height:89.5px;background:#fff;border-radius:6px;box-shadow:0 1px 3px rgba(0,0,0,0.25)">
  <div class="abs" style="left:0;top:11px;width:107.5px;text-align:center;font-size:9.3px;line-height:9.7px;color:#333">Bishkek<br>2021-03-19 7:00 PM<br>(LT)</div>
  <table class="abs" style="left:10.5px;top:40.5px;width:87px;border-collapse:collapse;font-size:9.3px;border:1px solid #02477f">
    <tr style="background:#02477f;color:#fff;font-weight:bold;height:18px"><td style="width:55px;text-align:center;padding:0 0 1.5px 0">Pollutant</td><td style="text-align:center;padding:0 0 1.5px 0">AQI</td></tr>
    <tr style="height:20px"><td style="background:#fff;text-align:center;color:#333;padding:0;border-right:1px solid #02477f">PM2.5</td><td style="background:#00e400;text-align:center;color:#111;padding:0">48</td></tr>
  </table>
</div>
<svg class="abs" style="left:222px;top:164px" width="16" height="8" viewBox="0 0 16 8"><path d="M0,0 L16,0 L8,7 Z" fill="#fff"/></svg>

<div class="abs ph" style="top:2px">Select a City</div>
<div class="abs sel" style="top:27px">Bishkek<span class="x">×</span><span class="ar"></span></div>
<div class="abs ph" style="top:65px">Select a Parameter</div>
<div class="abs sel" style="top:90px">PM2.5<span class="x">×</span><span class="ar"></span></div>

<div id="rss" class="abs"><div class="n">Bishkek</div>
  <div class="ic"><svg width="23" height="23" viewBox="0 0 23 23"><circle cx="5.4" cy="17.6" r="2.5" fill="#fff"/><path d="M3 10.6 A9 9 0 0 1 12 19.6" fill="none" stroke="#fff" stroke-width="3"/><path d="M3 4.4 A15.2 15.2 0 0 1 18.2 19.6" fill="none" stroke="#fff" stroke-width="3"/></svg></div>
</div>
<div id="note" class="abs">Note: Values above 500 are considered Beyond the AQI. Follow recommendations for the Hazardous category. Additional information on reducing exposure to extremely high levels of particle pollution is available <b>here</b>.</div>

<div class="abs tab" style="left:86px;width:111px">Concentration</div>
<div class="abs tab" style="left:199px;width:92px">Historical</div>
<div id="tabline" class="abs"></div>
<div id="tab1" class="abs tab">AQI</div>
<div id="learn" class="abs">Learn more about how the Air Quality Index [AQI] is calculated from the EPA <b>here</b>.</div>

<div id="chart" class="abs">
</div>
<svg class="abs" style="left:0;top:0" width="739" height="568" viewBox="0 0 739 568">
<g font-family="Liberation Sans" >
<text x="279.3" y="384.7" text-anchor="middle" font-size="12" fill="#333" letter-spacing="0.26">Bishkek – PM2.5</text>
<rect x="63" y="506.6" width="476" height="1" fill="#e6e6e6"/>
<rect x="63" y="482.4" width="476" height="1" fill="#e6e6e6"/>
<rect x="63" y="458.1" width="476" height="1" fill="#e6e6e6"/>
<rect x="63" y="433.8" width="476" height="1" fill="#e6e6e6"/>
<rect x="63" y="409.5" width="476" height="1" fill="#e6e6e6"/>
<text x="52.5" y="532.9" text-anchor="end" font-size="8" fill="#222">0</text>
<text x="52.5" y="508.6" text-anchor="end" font-size="8" fill="#222">100</text>
<text x="52.5" y="484.4" text-anchor="end" font-size="8" fill="#222">200</text>
<text x="52.5" y="460.1" text-anchor="end" font-size="8" fill="#222">300</text>
<text x="52.5" y="435.8" text-anchor="end" font-size="8" fill="#222">400</text>
<text x="52.5" y="411.5" text-anchor="end" font-size="8" fill="#222">500</text>
<text transform="translate(32,467.3) rotate(-90)" text-anchor="middle" font-size="8" fill="#222">AQI</text>
<rect x="67.3" y="515.9" width="10" height="15.5" fill="#ffff00" stroke="#333" stroke-width="1"/>
<rect x="87.2" y="507.1" width="10" height="24.3" fill="#ffff00" stroke="#333" stroke-width="1"/>
<rect x="107.0" y="496.5" width="10" height="34.9" fill="#ff7e00" stroke="#333" stroke-width="1"/>
<rect x="126.9" y="496.5" width="10" height="34.9" fill="#ff7e00" stroke="#333" stroke-width="1"/>
<rect x="146.8" y="503.5" width="10" height="27.9" fill="#ff7e00" stroke="#333" stroke-width="1"/>
<rect x="166.6" y="512.5" width="10" height="18.9" fill="#ffff00" stroke="#333" stroke-width="1"/>
<rect x="186.5" y="516.4" width="10" height="15.0" fill="#ffff00" stroke="#333" stroke-width="1"/>
<rect x="206.3" y="519.0" width="10" height="12.4" fill="#ffff00" stroke="#333" stroke-width="1"/>
<rect x="226.2" y="522.9" width="10" height="8.5" fill="#00e400" stroke="#333" stroke-width="1"/>
<rect x="246.1" y="525.6" width="10" height="5.8" fill="#00e400" stroke="#333" stroke-width="1"/>
<rect x="265.9" y="526.3" width="10" height="5.1" fill="#00e400" stroke="#333" stroke-width="1"/>
<rect x="285.8" y="528.5" width="10" height="2.9" fill="#00e400" stroke="#333" stroke-width="1"/>
<rect x="305.6" y="529.7" width="10" height="1.7" fill="#00e400" stroke="#333" stroke-width="1"/>
<rect x="325.5" y="529.0" width="10" height="2.4" fill="#00e400" stroke="#333" stroke-width="1"/>
<rect x="345.4" y="526.8" width="10" height="4.6" fill="#00e400" stroke="#333" stroke-width="1"/>
<rect x="365.2" y="525.6" width="10" height="5.8" fill="#00e400" stroke="#333" stroke-width="1"/>
<rect x="385.1" y="525.6" width="10" height="5.8" fill="#00e400" stroke="#333" stroke-width="1"/>
<rect x="404.9" y="526.8" width="10" height="4.6" fill="#00e400" stroke="#333" stroke-width="1"/>
<rect x="424.8" y="527.5" width="10" height="3.9" fill="#00e400" stroke="#333" stroke-width="1"/>
<rect x="444.7" y="528.0" width="10" height="3.4" fill="#00e400" stroke="#333" stroke-width="1"/>
<rect x="464.5" y="525.6" width="10" height="5.8" fill="#00e400" stroke="#333" stroke-width="1"/>
<rect x="484.4" y="523.1" width="10" height="8.3" fill="#00e400" stroke="#333" stroke-width="1"/>
<rect x="504.2" y="521.7" width="10" height="9.7" fill="#00e400" stroke="#333" stroke-width="1"/>
<rect x="524.1" y="519.8" width="10" height="11.6" fill="#00e400" stroke="#333" stroke-width="1"/>
<rect x="62.4" y="530.9" width="477" height="1" fill="#ccd6eb"/>
<rect x="61.9" y="531.4" width="1" height="6" fill="#ccd6eb"/>
<rect x="81.8" y="531.4" width="1" height="6" fill="#ccd6eb"/>
<rect x="101.6" y="531.4" width="1" height="6" fill="#ccd6eb"/>
<rect x="121.5" y="531.4" width="1" height="6" fill="#ccd6eb"/>
<rect x="141.3" y="531.4" width="1" height="6" fill="#ccd6eb"/>
<rect x="161.2" y="531.4" width="1" height="6" fill="#ccd6eb"/>
<rect x="181.1" y="531.4" width="1" height="6" fill="#ccd6eb"/>
<rect x="200.9" y="531.4" width="1" height="6" fill="#ccd6eb"/>
<rect x="220.8" y="531.4" width="1" height="6" fill="#ccd6eb"/>
<rect x="240.6" y="531.4" width="1" height="6" fill="#ccd6eb"/>
<rect x="260.5" y="531.4" width="1" height="6" fill="#ccd6eb"/>
<rect x="280.4" y="531.4" width="1" height="6" fill="#ccd6eb"/>
<rect x="300.2" y="531.4" width="1" height="6" fill="#ccd6eb"/>
<rect x="320.1" y="531.4" width="1" height="6" fill="#ccd6eb"/>
<rect x="339.9" y="531.4" width="1" height="6" fill="#ccd6eb"/>
<rect x="359.8" y="531.4" width="1" height="6" fill="#ccd6eb"/>
<rect x="379.7" y="531.4" width="1" height="6" fill="#ccd6eb"/>
<rect x="399.5" y="531.4" width="1" height="6" fill="#ccd6eb"/>
<rect x="419.4" y="531.4" width="1" height="6" fill="#ccd6eb"/>
<rect x="439.2" y="531.4" width="1" height="6" fill="#ccd6eb"/>
<rect x="459.1" y="531.4" width="1" height="6" fill="#ccd6eb"/>
<rect x="479.0" y="531.4" width="1" height="6" fill="#ccd6eb"/>
<rect x="498.8" y="531.4" width="1" height="6" fill="#ccd6eb"/>
<rect x="518.7" y="531.4" width="1" height="6" fill="#ccd6eb"/>
<rect x="538.5" y="531.4" width="1" height="6" fill="#ccd6eb"/>
<text transform="translate(73.8,542.3) rotate(-45)" text-anchor="end" font-size="7.7" fill="#555" letter-spacing="0.15">8 PM</text>
<text transform="translate(93.7,542.3) rotate(-45)" text-anchor="end" font-size="7.7" fill="#555" letter-spacing="0.15">9 PM</text>
<text transform="translate(113.5,542.3) rotate(-45)" text-anchor="end" font-size="7.7" fill="#555" letter-spacing="0.15">10 PM</text>
<text transform="translate(133.4,542.3) rotate(-45)" text-anchor="end" font-size="7.7" fill="#555" letter-spacing="0.15">11 PM</text>
<text transform="translate(153.3,542.3) rotate(-45)" text-anchor="end" font-size="7.7" fill="#555" letter-spacing="0.15">Mar 20, 2021 12 AM</text>
<text transform="translate(173.1,542.3) rotate(-45)" text-anchor="end" font-size="7.7" fill="#555" letter-spacing="0.15">1 AM</text>
<text transform="translate(193.0,542.3) rotate(-45)" text-anchor="end" font-size="7.7" fill="#555" letter-spacing="0.15">2 AM</text>
<text transform="translate(212.8,542.3) rotate(-45)" text-anchor="end" font-size="7.7" fill="#555" letter-spacing="0.15">3 AM</text>
<text transform="translate(232.7,542.3) rotate(-45)" text-anchor="end" font-size="7.7" fill="#555" letter-spacing="0.15">4 AM</text>
<text transform="translate(252.6,542.3) rotate(-45)" text-anchor="end" font-size="7.7" fill="#555" letter-spacing="0.15">5 AM</text>
<text transform="translate(272.4,542.3) rotate(-45)" text-anchor="end" font-size="7.7" fill="#555" letter-spacing="0.15">6 AM</text>
<text transform="translate(292.3,542.3) rotate(-45)" text-anchor="end" font-size="7.7" fill="#555" letter-spacing="0.15">7 AM</text>
<text transform="translate(312.1,542.3) rotate(-45)" text-anchor="end" font-size="7.7" fill="#555" letter-spacing="0.15">8 AM</text>
<text transform="translate(332.0,542.3) rotate(-45)" text-anchor="end" font-size="7.7" fill="#555" letter-spacing="0.15">9 AM</text>
<text transform="translate(351.9,542.3) rotate(-45)" text-anchor="end" font-size="7.7" fill="#555" letter-spacing="0.15">10 AM</text>
<text transform="translate(371.7,542.3) rotate(-45)" text-anchor="end" font-size="7.7" fill="#555" letter-spacing="0.15">11 AM</text>
<text transform="translate(391.6,542.3) rotate(-45)" text-anchor="end" font-size="7.7" fill="#555" letter-spacing="0.15">12 PM</text>
<text transform="translate(411.4,542.3) rotate(-45)" text-anchor="end" font-size="7.7" fill="#555" letter-spacing="0.15">1 PM</text>
<text transform="translate(431.3,542.3) rotate(-45)" text-anchor="end" font-size="7.7" fill="#555" letter-spacing="0.15">2 PM</text>
<text transform="translate(451.2,542.3) rotate(-45)" text-anchor="end" font-size="7.7" fill="#555" letter-spacing="0.15">3 PM</text>
<text transform="translate(471.0,542.3) rotate(-45)" text-anchor="end" font-size="7.7" fill="#555" letter-spacing="0.15">4 PM</text>
<text transform="translate(490.9,542.3) rotate(-45)" text-anchor="end" font-size="7.7" fill="#555" letter-spacing="0.15">5 PM</text>
<text transform="translate(510.7,542.3) rotate(-45)" text-anchor="end" font-size="7.7" fill="#555" letter-spacing="0.15">6 PM</text>
<text transform="translate(530.6,542.3) rotate(-45)" text-anchor="end" font-size="7.7" fill="#555" letter-spacing="0.15">7 PM</text>
</g></svg>

<div id="cc" class="abs">
  <div class="top"><div style="font-size:10px;padding-top:4.5px;line-height:12px">Current Conditions</div><div style="font-size:8px;line-height:13px;padding-top:1px">observed at</div><div style="font-size:10px;line-height:14px;padding-top:1px">Mar 19, 2021 7:00 PM (LT)</div></div>
  <div class="g">48 AQI<br>Good<br>PM2.5</div>
  <div class="hm" style="top:133px">Health Message</div>
  <div class="body" style="white-space:nowrap">The AQI value for your community is<br>between 0 and 50. Air quality is satisfactory<br>and poses little or no health risk.</div>
</div>

</body></html>
